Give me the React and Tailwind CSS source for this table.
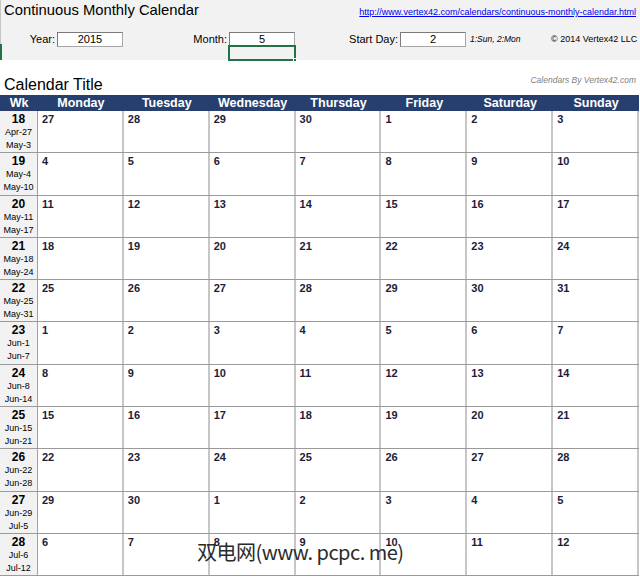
import React from "react";

const DAYS = ["Monday", "Tuesday", "Wednesday", "Thursday", "Friday", "Saturday", "Sunday"];
const MONTHS = ["Jan", "Feb", "Mar", "Apr", "May", "Jun", "Jul", "Aug", "Sep", "Oct", "Nov", "Dec"];

// Build 11 weeks starting Monday Apr 27, 2015 (week 18)
function buildWeeks() {
  const weeks = [];
  const start = new Date(2015, 3, 27);
  for (let w = 0; w < 11; w++) {
    const days = [];
    for (let d = 0; d < 7; d++) {
      const dt = new Date(start);
      dt.setDate(start.getDate() + w * 7 + d);
      days.push(dt);
    }
    const first = days[0];
    const last = days[6];
    weeks.push({
      num: 18 + w,
      from: `${MONTHS[first.getMonth()]}-${first.getDate()}`,
      to: `${MONTHS[last.getMonth()]}-${last.getDate()}`,
      days,
    });
  }
  return weeks;
}

function InputBox({ value }) {
  return (
    <div className="w-[66px] h-[15px] bg-white border border-[#a6a6a6] border-t-[#7a7a7a] border-l-[#7a7a7a] flex items-center justify-center text-[11px] leading-none text-black">
      {value}
    </div>
  );
}

export default function App() {
  const weeks = buildWeeks();

  return (
    <div
      className="relative w-[640px] h-[579px] bg-white overflow-hidden text-black"
      style={{ fontFamily: '"Liberation Sans", Arial, sans-serif' }}
    >
      {/* Header band */}
      <div className="relative h-[60px] bg-[#f2f2f2]">
        <div className="flex items-start justify-between pl-[4px] pr-[4px]">
          <div className="text-[14.8px] leading-[20px]">Continuous Monthly Calendar</div>
          <a className="text-[9px] leading-[12px] mt-[6px] text-[#0000ee] underline">
            http://www.vertex42.com/calendars/continuous-monthly-calendar.html
          </a>
        </div>
        <div className="flex items-center mt-[12px] text-[11px] leading-none">
          <div className="w-[57px] text-right pr-[2px]">Year:</div>
          <InputBox value="2015" />
          <div className="w-[106px] text-right pr-[2px]">Month:</div>
          <InputBox value="5" />
          <div className="w-[105px] text-right pr-[2px]">Start Day:</div>
          <InputBox value="2" />
          <div className="w-[85px] pl-[4px] text-[8.5px] italic">1:Sun, 2:Mon</div>
          <div className="text-[9px]">© 2014 Vertex42 LLC</div>
        </div>
        {/* Selected spreadsheet cell */}
        <div className="absolute left-[228px] top-[45px] w-[68px] h-[16px] border-2 border-[#217346]">
          <div className="absolute -right-[3px] -bottom-[3px] w-[4px] h-[4px] bg-[#217346] border border-white" />
        </div>
        <div className="absolute left-0 top-0 w-[1px] h-[60px] bg-[#c6c6c6]" />
        <div className="absolute left-0 top-[44px] w-[2px] h-[16px] bg-[#217346]" />
      </div>

      {/* Calendar title row */}
      <div className="h-[35px] flex items-end justify-between px-[4px]">
        <div className="text-[16px] leading-[18px] pb-[1px]">Calendar Title</div>
        <div className="text-[8.5px] italic text-[#808080] pb-[8px]">Calendars By Vertex42.com</div>
      </div>

      {/* Calendar grid */}
      <div className="w-[639px]">
        <div className="grid grid-cols-[38px_repeat(7,minmax(0,1fr))] h-[16px] bg-[#263f6f] text-white font-bold text-[12.5px] leading-[16px]">
          <div className="text-center">Wk</div>
          {DAYS.map((d) => (
            <div key={d} className="text-center">{d}</div>
          ))}
        </div>
        {weeks.map((wk) => (
          <div
            key={wk.num}
            className="grid grid-cols-[38px_repeat(7,minmax(0,1fr))] h-[42.3px] border-b border-[#9a9a9a]"
          >
            <div className="bg-[#f2f2f2] border-r border-[#a0a0a0] flex flex-col items-center pt-[1px]">
              <div className="font-bold text-[12px] leading-[14px]">{wk.num}</div>
              <div className="text-[9px] leading-[13px]">{wk.from}</div>
              <div className="text-[9px] leading-[13px]">{wk.to}</div>
            </div>
            {wk.days.map((dt, i) => (
              <div
                key={i}
                className="border-r-2 border-[#c6c6c6] pl-[4px] pt-[2px] font-bold text-[11px] leading-[13px] text-[#1c1c38]"
              >
                {dt.getDate()}
              </div>
            ))}
          </div>
        ))}
      </div>

      {/* Watermark */}
      <div
        className="absolute left-[197px] top-[539px] text-[20px] leading-[26px] text-[#2a2a2a] whitespace-nowrap tracking-[-0.5px]"
        style={{ fontFamily: '"Noto Sans CJK SC", "Liberation Sans", sans-serif' }}
      >
        双电网(www. pcpc. me)
      </div>
    </div>
  );
}
